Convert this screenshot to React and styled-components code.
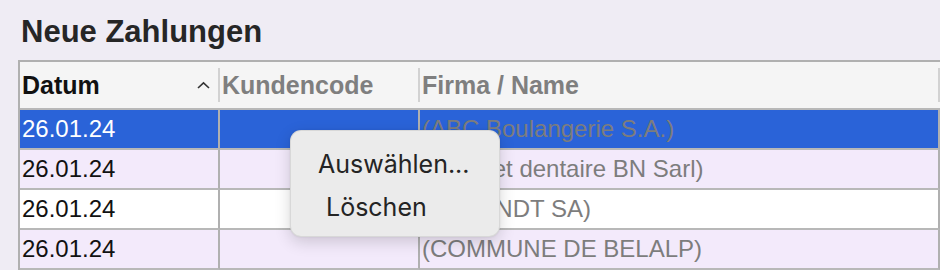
import React from "react";
import styled, { createGlobalStyle } from "styled-components";

const GlobalStyle = createGlobalStyle`
  html, body {
    margin: 0;
    padding: 0;
    background: #efecf4;
  }
  body {
    font-family: "Liberation Sans", Arial, sans-serif;
  }
`;

const Page = styled.div`
  width: 940px;
  height: 270px;
  padding-top: 14px;
  box-sizing: border-box;
  overflow: hidden;
  position: relative;
`;

const Title = styled.h1`
  margin: 0 0 10px 21px;
  font-size: 31px;
  line-height: 36px;
  font-weight: bold;
  color: #262626;
`;

const Table = styled.div`
  margin-left: 18px;
  width: 922px;
  border-top: 2px solid #b0b0b0;
  border-left: 2px solid #b0b0b0;
  box-sizing: border-box;
`;

const HeaderRow = styled.div`
  display: grid;
  grid-template-columns: 200px 200px 1fr;
  height: 46px;
  background: #f5f5f5;
  border-bottom: 2px solid #b8b8b8;
`;

const HeaderCell = styled.div`
  position: relative;
  display: flex;
  align-items: center;
  justify-content: space-between;
  padding: 0 10px 0 2px;
  font-size: 25px;
  font-weight: bold;
  color: ${(p) => (p.$active ? "#111" : "#7f7f7f")};

  &::after {
    content: "";
    position: absolute;
    right: 0;
    top: 6px;
    width: 2px;
    height: 34px;
    background: #d2d2d2;
  }
`;

const Row = styled.div`
  display: grid;
  grid-template-columns: 200px 200px 1fr;
  height: 40px;
  background: ${(p) => p.$bg};
`;

const Cell = styled.div`
  display: flex;
  align-items: center;
  padding: 0 2px;
  border-right: 2px solid #b0b0b0;
  border-bottom: 2px solid #b8b8b8;
  font-size: 24px;
  white-space: nowrap;
  overflow: hidden;
  color: ${(p) => p.$color};
`;

const Menu = styled.div`
  position: absolute;
  left: 290px;
  top: 130px;
  width: 210px;
  height: 107px;
  box-sizing: border-box;
  padding-top: 16px;
  border-radius: 11px;
  background: #ebebeb;
  border: 1px solid rgba(0, 0, 0, 0.08);
  box-shadow: 0 5px 16px rgba(0, 0, 0, 0.16), 0 0 2px rgba(0, 0, 0, 0.1);
  font-family: Inter, "Liberation Sans", sans-serif;
`;

const MenuItem = styled.div`
  height: 43px;
  line-height: 34px;
  padding-left: ${(p) => p.$indent}px;
  font-size: 25px;
  color: #242424;
`;

const Chevron = () => (
  <svg width="13" height="8" viewBox="0 0 13 8">
    <path d="M1 7 L6.5 1.8 L12 7" fill="none" stroke="#333" strokeWidth="1.6" />
  </svg>
);

const rows = [
  { date: "26.01.24", name: "(ABC Boulangerie S.A.)", bg: "#2a63d8", selected: true },
  { date: "26.01.24", name: "(Cabinet dentaire BN Sarl)", bg: "#f3eafb" },
  { date: "26.01.24", name: "(ABRANDT SA)", bg: "#ffffff" },
  { date: "26.01.24", name: "(COMMUNE DE BELALP)", bg: "#f3eafb" },
];

export default function App() {
  return (
    <Page>
      <GlobalStyle />
      <Title>Neue Zahlungen</Title>
      <Table>
        <HeaderRow>
          <HeaderCell $active>
            Datum
            <Chevron />
          </HeaderCell>
          <HeaderCell>Kundencode</HeaderCell>
          <HeaderCell>Firma / Name</HeaderCell>
        </HeaderRow>
        {rows.map((r, i) => (
          <Row key={i} $bg={r.bg}>
            <Cell $color={r.selected ? "#ffffff" : "#111"}>{r.date}</Cell>
            <Cell />
            <Cell $color="#7d7d7d">{r.name}</Cell>
          </Row>
        ))}
      </Table>
      <Menu>
        <MenuItem $indent={27}>Auswählen...</MenuItem>
        <MenuItem $indent={35}>Löschen</MenuItem>
      </Menu>
    </Page>
  );
}
